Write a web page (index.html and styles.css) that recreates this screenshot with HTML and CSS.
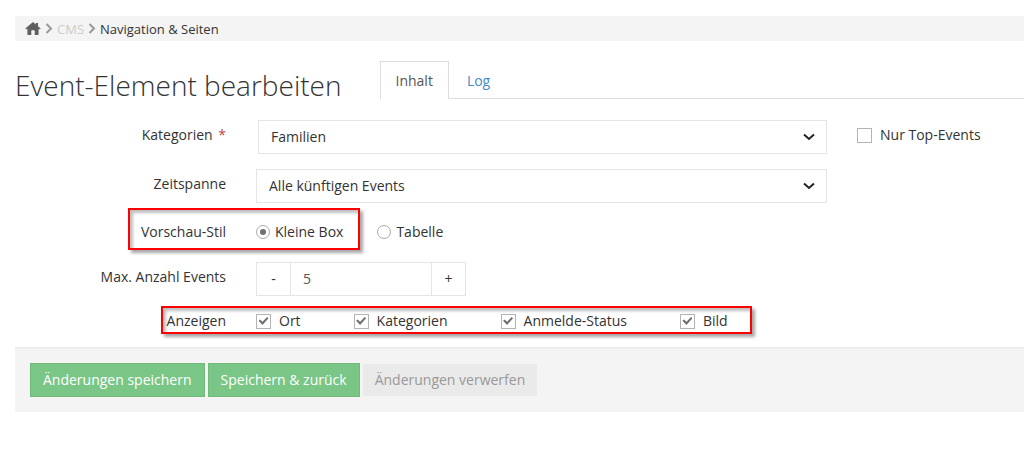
FILE: index.html
```html
<!DOCTYPE html>
<html lang="de">
<head>
<meta charset="utf-8">
<meta name="viewport" content="width=device-width, initial-scale=1">
<title>Event-Element bearbeiten</title>
<link rel="stylesheet" href="styles.css">
</head>
<body>
<nav class="breadcrumb" aria-label="Breadcrumb">
  <a class="crumb-home" href="#" aria-label="Start"><svg width="16" height="13" viewBox="0 0 16 13"><path d="M8 0 .3 6.6l.8.9L2.4 6.500V12.200q0 .8.8.8H6.300V8.900q0-.6.6-.6h2.200q.6 0 .6.6V13h3.100q.8 0 .8-.8V6.500l1.300 1 .8-.9L13 4.200V1h-2.200v1.400z" fill="#606060"/></svg></a>
  <svg class="crumb-sep" width="8" height="11" viewBox="0 0 8 11"><path d="M1.500 1l4.500 4.500L1.500 10"/></svg>
  <a class="crumb-link" href="#">CMS</a>
  <svg class="crumb-sep" width="8" height="11" viewBox="0 0 8 11"><path d="M1.500 1l4.500 4.500L1.500 10"/></svg>
  <a class="crumb-current" href="#">Navigation &amp; Seiten</a>
</nav>
<main>
  <header class="page-head">
    <h1>Event-Element bearbeiten</h1>
    <nav class="tabs">
      <a class="tab tab-active" href="#">Inhalt</a>
      <a class="tab" href="#">Log</a>
    </nav>
  </header>
  <form>
    <div class="form-row">
      <label class="label" for="kategorien">Kategorien <span class="required">*</span></label>
      <div class="select select-inset">
        <select id="kategorien"><option>Familien</option></select>
        <svg width="12" height="8" viewBox="0 0 12 8"><path d="M1 1.500l5 4.500 5-4.500"/></svg>
      </div>
      <label class="check side-check"><input type="checkbox">Nur Top-Events</label>
    </div>
    <div class="form-row">
      <label class="label" for="zeitspanne">Zeitspanne</label>
      <div class="select">
        <select id="zeitspanne"><option>Alle künftigen Events</option></select>
        <svg width="12" height="8" viewBox="0 0 12 8"><path d="M1 1.500l5 4.500 5-4.500"/></svg>
      </div>
    </div>
    <div class="form-row row-radios" role="radiogroup" aria-labelledby="stil">
      <span class="label" id="stil">Vorschau-Stil</span>
      <div class="radios">
        <label class="radio"><input type="radio" name="stil" checked>Kleine Box</label>
        <label class="radio"><input type="radio" name="stil">Tabelle</label>
      </div>
      <div class="mark mark-style"></div>
    </div>
    <div class="form-row">
      <label class="label" for="anzahl">Max. Anzahl Events</label>
      <div class="spinner">
        <button type="button">-</button>
        <input id="anzahl" type="text" value="5">
        <button type="button">+</button>
      </div>
    </div>
    <div class="form-row row-checks" role="group" aria-labelledby="anzeigen">
      <span class="label label-flush" id="anzeigen">Anzeigen</span>
      <div class="checks">
        <label class="check"><input type="checkbox" checked>Ort</label>
        <label class="check"><input type="checkbox" checked>Kategorien</label>
        <label class="check"><input type="checkbox" checked>Anmelde-Status</label>
        <label class="check"><input type="checkbox" checked>Bild</label>
      </div>
      <div class="mark mark-show"></div>
    </div>
    <div class="actions">
      <button class="btn btn-green" type="submit">Änderungen speichern</button>
      <button class="btn btn-green" type="submit">Speichern &amp; zurück</button>
      <button class="btn btn-grey" type="reset">Änderungen verwerfen</button>
    </div>
  </form>
</main>
</body>
</html>
```
FILE: styles.css
```css
* { box-sizing: border-box; }

body {
  margin: 0;
  padding: 16px 0 0 15px;
  background: #fff;
  color: #333;
  font: 14px/20px "Open Sans", sans-serif;
}

a { text-decoration: none; }

svg { display: block; fill: none; }

button, input, select { font: inherit; color: inherit; margin: 0; }

.breadcrumb {
  display: flex;
  align-items: center;
  height: 25px;
  padding-left: 10px;
  background: #f4f4f4;
  font-size: 13px;
}

.crumb-sep { margin: 0 4px; stroke: #999; stroke-width: 2; }
.crumb-link { color: #ccc; }
.crumb-current { color: #333; }

.page-head {
  display: flex;
  align-items: flex-end;
  gap: 38px;
  margin: 20px 0 21px;
}

h1 {
  margin: 0;
  color: #333;
  font-size: 28px;
  font-weight: 300;
  line-height: 28px;
  white-space: nowrap;
}

.tabs {
  display: flex;
  flex: 1;
  border-bottom: 1px solid #ddd;
}

.tab {
  padding: 9px 15px 7px;
  border: 1px solid transparent;
  border-bottom: 0;
  color: #428bca;
  margin-right: 2px;
}

.tab-active {
  margin-bottom: -1px;
  padding-bottom: 8px;
  border-color: #ddd;
  background: #fff;
  color: #555;
}

.form-row {
  position: relative;
  display: grid;
  grid-template-columns: 211px minmax(0, 1fr) 167px;
  column-gap: 30px;
  align-items: start;
  margin-bottom: 15px;
}

.label { padding-top: 5px; text-align: right; }
.label-flush { padding-top: 0; }
.required { margin-left: 2px; color: #b94a48; }

.select { display: grid; align-items: center; }
.select-inset { margin-left: 2px; }

.select select {
  grid-area: 1 / 1;
  width: 100%;
  height: 34px;
  padding: 0 12px;
  border: 1px solid #e5e5e5;
  border-radius: 0;
  background: #fff;
  appearance: none;
}

.select svg {
  grid-area: 1 / 1;
  justify-self: end;
  margin-right: 12px;
  stroke: #222;
  stroke-width: 2;
  pointer-events: none;
}

.check, .radio { display: flex; align-items: center; white-space: nowrap; }
.check { gap: 8px; }
.radio { gap: 5px; }
.side-check { padding-top: 5px; }

.check input {
  width: 15px;
  height: 15px;
  border: 1px solid #b4b4b4;
  background: #fff;
  appearance: none;
}

.check input:checked { display: grid; place-items: center; }

.check input:checked::before {
  content: "";
  width: 10px;
  height: 8px;
  background: #707070;
  clip-path: polygon(0 46%, 16% 30%, 40% 58%, 86% 0, 100% 16%, 40% 100%);
}

.radio input {
  display: grid;
  place-items: center;
  width: 14px;
  height: 14px;
  border: 1px solid #aaa;
  border-radius: 50%;
  background: #fff;
  appearance: none;
}

.radio input:checked::before {
  content: "";
  width: 6px;
  height: 6px;
  border-radius: 50%;
  background: #707070;
}

.row-radios { padding-bottom: 5px; }
.row-radios .label, .radios { padding-top: 4px; }
.radios { display: flex; gap: 34px; }

.spinner { display: flex; width: 210px; height: 34px; border: 1px solid #e5e5e5; }
.spinner button { width: 33px; padding: 0; border: 0; background: #fff; }
.spinner input {
  flex: 1;
  min-width: 0;
  padding: 0 12px;
  border: solid #e5e5e5;
  border-width: 0 1px;
  border-radius: 0;
  color: #555;
}

.row-checks { margin-bottom: 16px; }
.checks { display: flex; gap: 53px; }

.mark {
  position: absolute;
  border: 2px solid #f00;
  box-shadow: 3px 3px 3px rgba(0, 0, 0, .35), inset 3px 3px 3px rgba(0, 0, 0, .25);
  pointer-events: none;
}

.mark-style { left: 113px; top: -10px; width: 232px; height: 42px; }
.mark-show { left: 146px; top: -5px; width: 591px; height: 28px; }

.actions {
  display: flex;
  align-items: center;
  gap: 3px;
  padding: 15px;
  border-top: 1px solid #e5e9ec;
  background: #f4f4f4;
}

.btn { padding: 6px 12px; border: 1px solid transparent; }
.btn-green { border-color: #72b97c; background: #7ac686; color: #fff; }
.btn-grey { border: 0; background: #eaeaea; color: #999; }
```
